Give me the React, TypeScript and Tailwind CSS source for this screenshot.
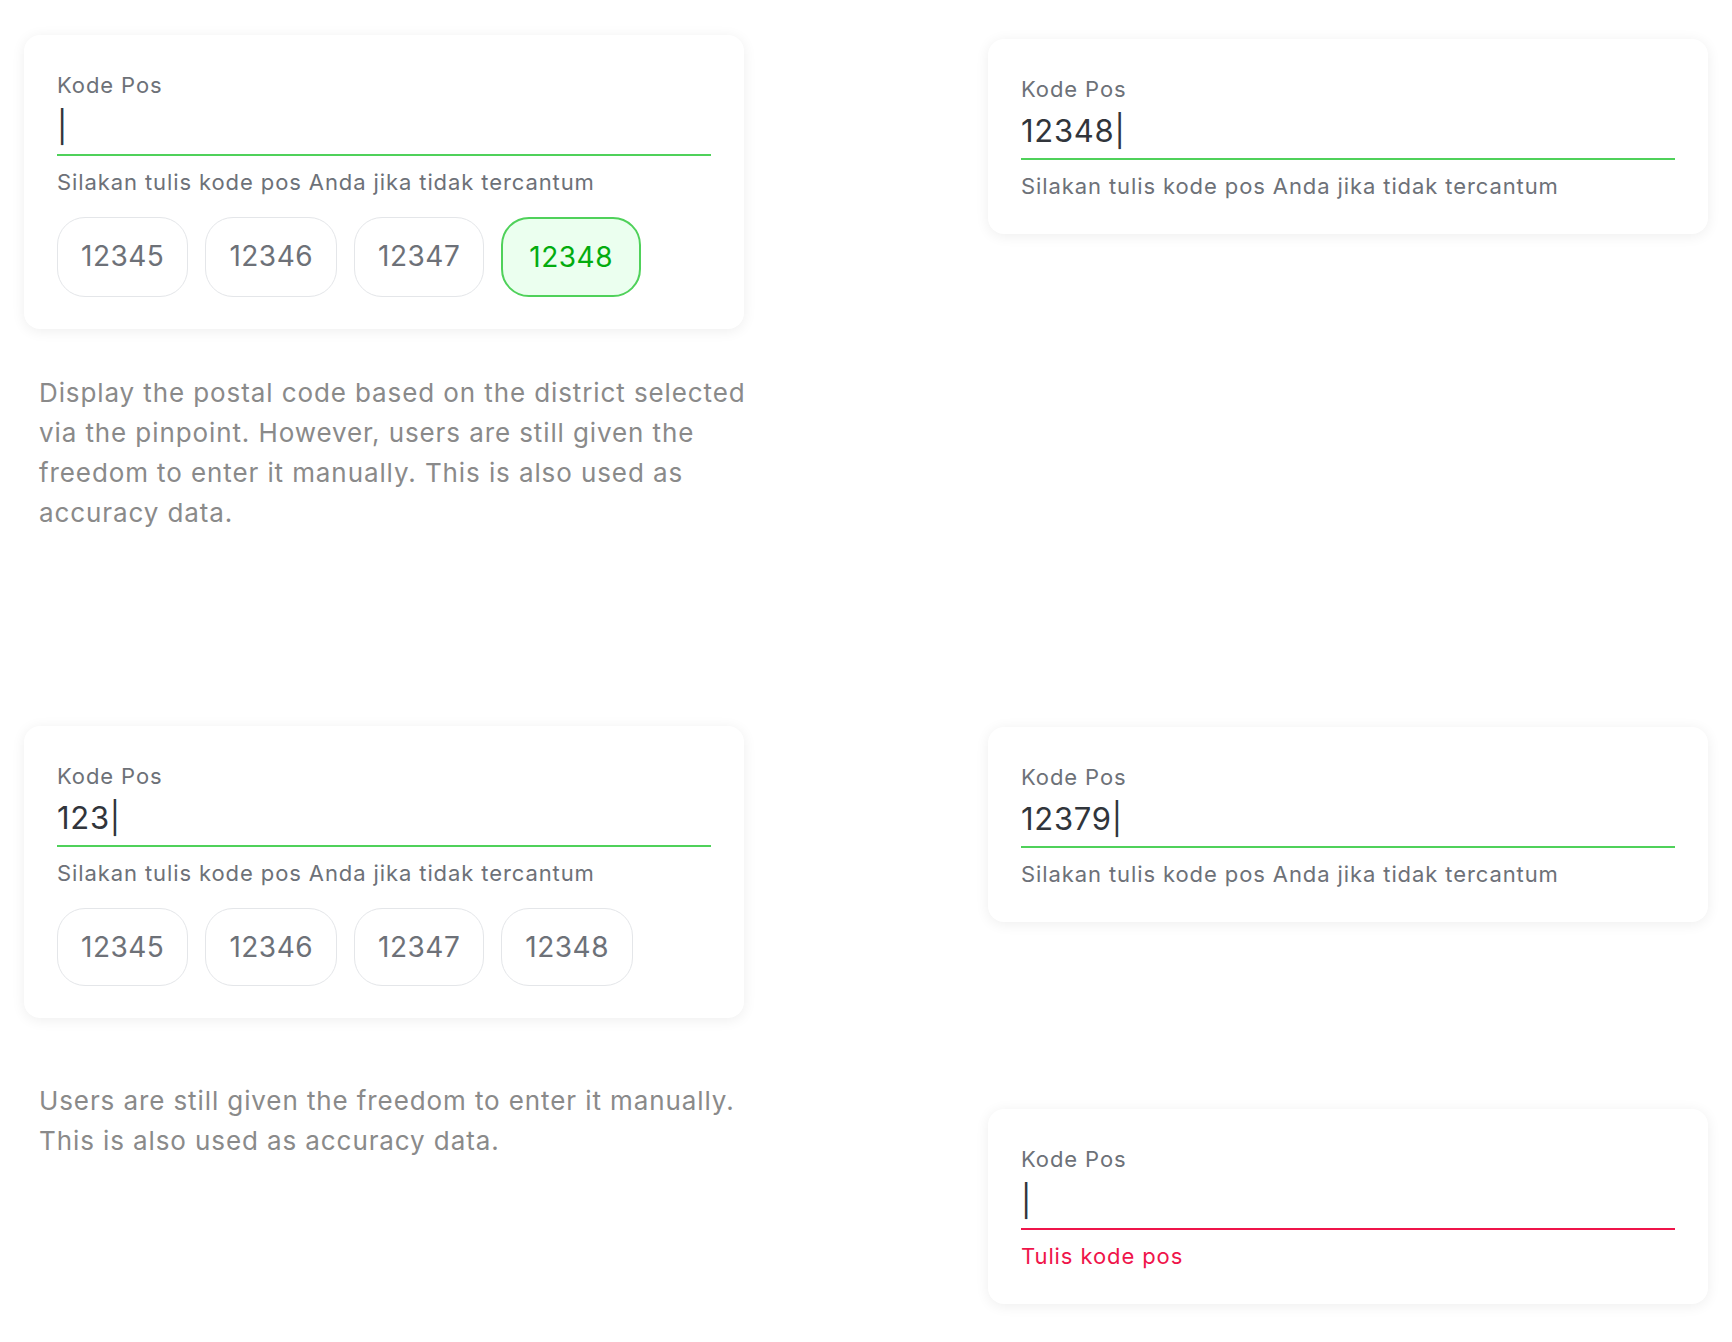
const CHIPS = ["12345", "12346", "12347", "12348"];

type CardProps = {
  value?: string;
  selected?: string;
  chips?: boolean;
  error?: string;
};

function KodePosCard({ value = "", selected, chips, error }: CardProps) {
  return (
    <div
      className={`w-[720px] rounded-[16px] bg-white px-[33px] pt-[36px] shadow-[0_2px_14px_rgba(0,0,0,0.07)] ${
        chips ? "pb-[32px]" : "pb-[34px]"
      }`}
    >
      <div className="text-[22px] leading-[28px] tracking-[0.9px] text-[#6d7178]">Kode Pos</div>
      <div
        className={`mt-[10px] border-b-2 pb-[9px] text-[31px] leading-[36px] tracking-[0.7px] text-[#31353b] ${
          error ? "border-[#ef144a]" : "border-[#4fd15a]"
        }`}
      >
        {value}|
      </div>
      <div
        className={`mt-[12px] text-[22px] leading-[28px] tracking-[0.9px] ${
          error ? "text-[#ef144a]" : "text-[#6d7178]"
        }`}
      >
        {error ?? "Silakan tulis kode pos Anda jika tidak tercantum"}
      </div>
      {chips && (
        <div className="mt-[21px] flex gap-[17px]">
          {CHIPS.map((c) =>
            c === selected ? (
              <div
                key={c}
                className="rounded-[28px] border-2 border-[#4fd15a] bg-[#ebffef] px-[26px] py-[21px] text-[28px] leading-[34px] tracking-[0.5px] text-[#03ac0e]"
              >
                {c}
              </div>
            ) : (
              <div
                key={c}
                className="rounded-[28px] border-[1.5px] border-[#e4e6e9] bg-white px-[23px] py-[21px] text-[28px] leading-[34px] tracking-[0.5px] text-[#6d7178]"
              >
                {c}
              </div>
            )
          )}
        </div>
      )}
    </div>
  );
}

export default function App() {
  return (
    <div className="min-h-screen bg-white font-['Inter',sans-serif]">
      <div className="flex gap-[244px] pl-[24px]">
        {/* kolom kiri: kartu dengan pilihan kode pos + catatan */}
        <div className="flex w-[720px] shrink-0 flex-col pt-[35px]">
          <KodePosCard chips selected="12348" />
          <p className="mt-[44px] w-[760px] pl-[15px] text-[26px] leading-[40px] tracking-[0.9px] text-[#8a8a8a]">
            Display the postal code based on the district selected via the pinpoint. However, users are
            still given the freedom to enter it manually. This is also used as accuracy data.
          </p>
          <div className="mt-[193px]">
            <KodePosCard chips value="123" />
          </div>
          <p className="mt-[63px] w-[760px] pl-[15px] text-[26px] leading-[40px] tracking-[0.9px] text-[#8a8a8a]">
            Users are still given the freedom to enter it manually. This is also used as accuracy data.
          </p>
        </div>

        {/* kolom kanan: state input manual & error */}
        <div className="flex flex-col pt-[39px]">
          <KodePosCard value="12348" />
          <div className="mt-[493px]">
            <KodePosCard value="12379" />
          </div>
          <div className="mt-[187px]">
            <KodePosCard error="Tulis kode pos" />
          </div>
        </div>
      </div>
    </div>
  );
}
